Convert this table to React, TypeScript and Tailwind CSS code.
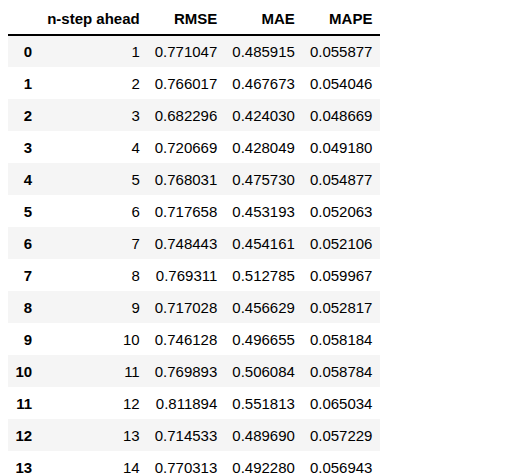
const rows: [number, string, string, string][] = [
  [1, '0.771047', '0.485915', '0.055877'],
  [2, '0.766017', '0.467673', '0.054046'],
  [3, '0.682296', '0.424030', '0.048669'],
  [4, '0.720669', '0.428049', '0.049180'],
  [5, '0.768031', '0.475730', '0.054877'],
  [6, '0.717658', '0.453193', '0.052063'],
  [7, '0.748443', '0.454161', '0.052106'],
  [8, '0.769311', '0.512785', '0.059967'],
  [9, '0.717028', '0.456629', '0.052817'],
  [10, '0.746128', '0.496655', '0.058184'],
  [11, '0.769893', '0.506084', '0.058784'],
  [12, '0.811894', '0.551813', '0.065034'],
  [13, '0.714533', '0.489690', '0.057229'],
  [14, '0.770313', '0.492280', '0.056943'],
];

const headers = ['n-step ahead', 'RMSE', 'MAE', 'MAPE'];

export default function App() {
  return (
    <div className="min-h-screen bg-white pl-2 pt-[3px] font-['Liberation_Sans',Arial,sans-serif] text-[15px] text-black">
      <table className="border-collapse border-spacing-0">
        <thead className="border-b-2 border-black">
          <tr className="h-8">
            <th className="px-[7.5px] py-0" />
            {headers.map((h) => (
              <th key={h} className="px-[7.5px] py-0 text-right font-bold leading-[17px]">
                {h}
              </th>
            ))}
          </tr>
        </thead>
        <tbody>
          {rows.map(([step, rmse, mae, mape], i) => (
            <tr key={i} className={i % 2 === 0 ? 'h-8 bg-[#f5f5f5]' : 'h-8'}>
              <th className="px-[7.5px] py-0 text-right align-middle font-bold leading-[17px]">{i}</th>
              <td className="px-[7.5px] py-0 text-right leading-[17px]">{step}</td>
              <td className="px-[7.5px] py-0 text-right leading-[17px]">{rmse}</td>
              <td className="px-[7.5px] py-0 text-right leading-[17px]">{mae}</td>
              <td className="px-[7.5px] py-0 text-right leading-[17px]">{mape}</td>
            </tr>
          ))}
        </tbody>
      </table>
    </div>
  );
}
